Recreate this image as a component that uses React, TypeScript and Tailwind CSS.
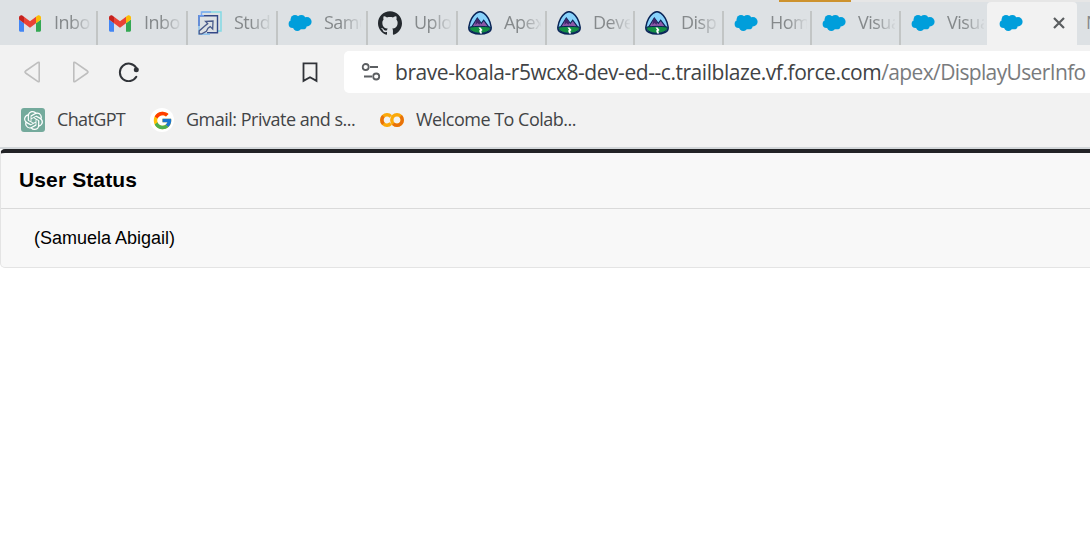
import React from "react";
import { FcGoogle } from "react-icons/fc";
import { SiGithub, SiOpenai } from "react-icons/si";

function Gmail() {
  return (
    <svg viewBox="52 42 88 66" className="h-[17px] w-[22px]">
      <path fill="#4285f4" d="M58 108h14V74L52 59v43c0 3.32 2.69 6 6 6" />
      <path fill="#34a853" d="M120 108h14c3.32 0 6-2.69 6-6V59l-20 15" />
      <path fill="#fbbc04" d="M120 48v26l20-15v-8c0-7.42-8.47-11.65-14.4-7.2" />
      <path fill="#ea4335" d="M72 74V48l24 18 24-18v26L96 92" />
      <path fill="#c5221f" d="M52 51v8l20 15V48l-5.6-4.2c-5.94-4.45-14.4-.22-14.4 7.2" />
    </svg>
  );
}

function Cloud() {
  return (
    <svg viewBox="0 0 24 24" className="size-6">
      <g fill="#009edb">
        <circle cx="7" cy="8.300" r="4.400" />
        <circle cx="13.300" cy="8.100" r="4" />
        <circle cx="18.900" cy="10.800" r="4.700" />
        <circle cx="4.700" cy="13" r="4.100" />
        <circle cx="9.300" cy="15.700" r="4.300" />
        <circle cx="14.800" cy="14.400" r="3.900" />
        <path d="M5 8h14v7H5z" />
      </g>
    </svg>
  );
}

function Studio() {
  return (
    <svg viewBox="0 0 24 24" className="size-6" fill="none">
      <path d="M4 1h19v19h-4" stroke="#83d9e4" strokeWidth="1.5" />
      <path d="M3.500 5V1H13" stroke="#80aaf0" strokeWidth="1.500" />
      <path d="M1 15V4.700h18.500v17H9" stroke="#344887" strokeWidth="1.400" />
      <path d="M1 15V4.700h5" stroke="#6799ee" strokeWidth="1.400" />
      <path d="M12 23.200H1V15" stroke="#75b9ee" strokeWidth="1.200" />
      <path
        d="M7.500 10.300 15 10l-.3 8-2.500-2.400-2.200 1.600-1.600 3.200-4.600 2.500H1.200v-3l5.300-4.600 3.200-2.700z"
        fill="#dde1e4"
        stroke="#4a5a8a"
        strokeWidth="1.300"
      />
    </svg>
  );
}

function Trail() {
  return (
    <svg viewBox="0 0 24 24" className="size-6">
      <path
        d="M12 .7c1.400 0 2.900.8 4.100 1.700 3.600 2.700 6.100 7.900 7 13.500.4 2.700-.5 4.300-2.800 5.300-2.500 1.200-5.400 1.900-8.300 1.900s-5.800-.7-8.300-1.900C1.400 20.200.5 18.600.9 15.900c.9-5.600 3.400-10.800 7-13.500C9.100 1.500 10.600.7 12 .7z"
        fill="#88d2fb"
        stroke="#0a2557"
        strokeWidth="1.500"
      />
      <path d="M3.500 16.300 9.300 7l4 5.400 2.400-3.200 5.300 7.100z" fill="#8d58a8" stroke="#0a2557" strokeWidth="1.100" />
      <path d="m9.300 7 3 4.200-.8 2.500-2-1.800-2 2.200.2-4.300z" fill="#42276d" />
      <path d="M1.700 16.100c6.500-1 14-1 20.600 0 .2 2-.4 3.300-2.300 4.200-4.900 2.600-11.200 2.600-16 0-1.900-.9-2.500-2.200-2.300-4.200z" fill="#149044" stroke="#0a2557" strokeWidth="1" />
      <path d="M10.500 16.500h2l2 2.500-1.200 1.200.8 2.300h-2l-1-2.800 1-1z" fill="#fff" />
    </svg>
  );
}

type TabProps = { icon: React.ReactNode; label: string; size: string; line?: boolean };

function Tab({ icon, label, size, line = true }: TabProps) {
  return (
    <div className={`flex h-[34px] shrink-0 items-center ${size} ${line ? "border-l-2 border-[#c2c5c5] pl-[10px]" : "pl-[18px]"}`}>
      <div className="mb-[10px] flex size-6 shrink-0 items-center justify-center">{icon}</div>
      <span className="mb-3 ml-3 w-[37px] overflow-hidden whitespace-nowrap text-[18px] leading-6 tracking-[-0.5px] text-[#85898b] [mask-image:linear-gradient(to_right,#000_45%,transparent_105%)]">
        {label}
      </span>
    </div>
  );
}

const tabs: TabProps[] = [
  { icon: <Gmail />, label: "Inbo", size: "w-[96px]", line: false },
  { icon: <Gmail />, label: "Inbo", size: "w-[90px]" },
  { icon: <Studio />, label: "Stud", size: "w-[90px]" },
  { icon: <Cloud />, label: "Samu", size: "w-[90px]" },
  { icon: <SiGithub className="size-6 text-[#24292e]" />, label: "Uplo", size: "w-[90px]" },
  { icon: <Trail />, label: "Apex", size: "w-[89px]" },
  { icon: <Trail />, label: "Deve", size: "w-[88px]" },
  { icon: <Trail />, label: "Disp", size: "w-[89px]" },
  { icon: <Cloud />, label: "Hom", size: "w-[88px]" },
  { icon: <Cloud />, label: "Visua", size: "w-[89px]" },
  { icon: <Cloud />, label: "Visua", size: "w-[88px]" },
];

export default function App() {
  return (
    <div className="h-[558px] w-[1090px] overflow-hidden bg-white font-['Open_Sans',sans-serif]">
      <div className="flex h-[45px] flex-col bg-[#dde1e4]">
        <div className="flex h-[2px] pl-[779px]">
          <div className="w-[72px] bg-[#cd922d]" />
          <div className="flex-1 bg-[#e6e6e6]" />
        </div>
        <div className="flex h-[43px] items-end overflow-hidden">
          {tabs.map((tab, i) => (
            <Tab key={i} {...tab} />
          ))}
          <div className="flex h-[43px] w-[90px] shrink-0 items-start rounded-t-[4px] bg-[#f2f2f2] pl-3 pt-[9px]">
            <Cloud />
            <svg viewBox="0 0 12 12" className="ml-[30px] mt-[5.500px] size-3" stroke="#5b5e60" strokeWidth="2.200">
              <path d="m1 1 10 10M11 1 1 11" />
            </svg>
          </div>
          <span className="ml-[9px] h-[35px] shrink-0 text-[18px] leading-6 text-[#85898b]">N</span>
        </div>
      </div>

      <div className="flex h-[102px] flex-col bg-[#f2f2f2]">
        <div className="flex h-[48px] items-start pt-[6px]">
          <div className="flex h-[42px] w-[344px] shrink-0 items-center pl-[24px]">
            <svg viewBox="0 0 18 22" className="h-[22px] w-[18px]" fill="none" stroke="#bebebe" strokeWidth="1.600" strokeLinejoin="round">
              <path d="M15.200 2v18q0 1.200-1.200.6L1.600 12q-1.200-1 0-2L14 1.400q1.200-.6 1.200.6z" />
            </svg>
            <svg viewBox="0 0 18 22" className="ml-[30px] h-[22px] w-[18px]" fill="none" stroke="#bebebe" strokeWidth="1.600" strokeLinejoin="round">
              <path d="M1.800 2v18q0 1.200 1.200.6L15.400 12q1.200-1 0-2L3 1.400Q1.800.8 1.800 2z" />
            </svg>
            <svg viewBox="0 0 22 20" className="ml-[28px] h-5 w-[22px]" fill="none" stroke="#303338" strokeWidth="2">
              <path d="M18.300 14.800A8.800 8.800 0 1 1 18.200 5.800" strokeLinecap="round" />
              <circle cx="18.300" cy="7.800" r="2.500" fill="#303338" stroke="none" />
            </svg>
            <svg viewBox="0 0 16 21" className="ml-[162px] h-[21px] w-4" fill="none" stroke="#303338" strokeWidth="1.800">
              <path d="M1.500 1.300h13v17.600L8 15.200l-6.500 3.700z" />
            </svg>
          </div>
          <div className="flex h-[42px] flex-1 items-center overflow-hidden rounded-l-[5px] bg-white pl-[17px]">
            <svg viewBox="0 0 20 18" className="h-[18px] w-5 shrink-0" fill="none" stroke="#5c5f62" strokeWidth="1.800">
              <circle cx="4.700" cy="4" r="3" />
              <path d="M9 4h8M3 13.500h8" />
              <circle cx="15.200" cy="13.500" r="3" />
            </svg>
            <span className="ml-[14px] whitespace-nowrap text-[21px] leading-[42px] tracking-[-0.450px] text-[#414345]">
              brave-koala-r5wcx8-dev-ed--c.trailblaze.vf.force.com
            </span>
            <span className="whitespace-nowrap text-[21px] leading-[42px] tracking-[-0.640px] text-[#797b7d]">/apex/DisplayUserInfo</span>
          </div>
        </div>
        <div className="flex h-[54px] items-center whitespace-nowrap pl-[21px] text-[18px] leading-6 text-[#424446]">
          <div className="flex size-6 items-center justify-center rounded-[3px] bg-[#74aa9c]">
            <SiOpenai className="size-[19px] text-white" />
          </div>
          <span className="mb-[2px] ml-3 w-[93px] tracking-[-0.650px]">ChatGPT</span>
          <div className="flex size-6 items-center justify-center rounded-full bg-white">
            <FcGoogle className="size-[21px]" />
          </div>
          <span className="mb-[2px] ml-3 w-[194px] tracking-[-0.500px]">Gmail: Private and s...</span>
          <svg viewBox="0 0 24 14" className="h-[14px] w-6" fill="none" strokeWidth="3.400">
            <path d="M10.800 10.500A5.200 5.200 0 1 1 10.800 3.500" stroke="#fba90a" />
            <path d="M3.400 3.300a5.200 5.200 0 0 0 0 7.400" stroke="#e8710a" />
            <circle cx="17" cy="7" r="5.200" stroke="#fba90a" />
            <path d="M13.300 10.700a5.200 5.200 0 0 0 7.400-7.400" stroke="#e8710a" />
          </svg>
          <span className="mb-[2px] ml-3 tracking-[-0.500px]">Welcome To Colab...</span>
        </div>
      </div>
      <div className="h-[2px] bg-[#d3d7da]" />

      <div className="h-[119px] w-[1100px] rounded-[5px] border border-t-4 border-[#e4e4e4] border-t-[#222326] bg-[#f8f8f8] font-['Liberation_Sans',Arial,sans-serif] text-black">
        <h2 className="h-[56px] border-b border-[#dadada] pl-[18px] text-[21px] font-bold leading-[54px] tracking-[0.120px]">User Status</h2>
        <p className="pl-[33px] text-[18px] leading-[58px]">(Samuela Abigail)</p>
      </div>
    </div>
  );
}
